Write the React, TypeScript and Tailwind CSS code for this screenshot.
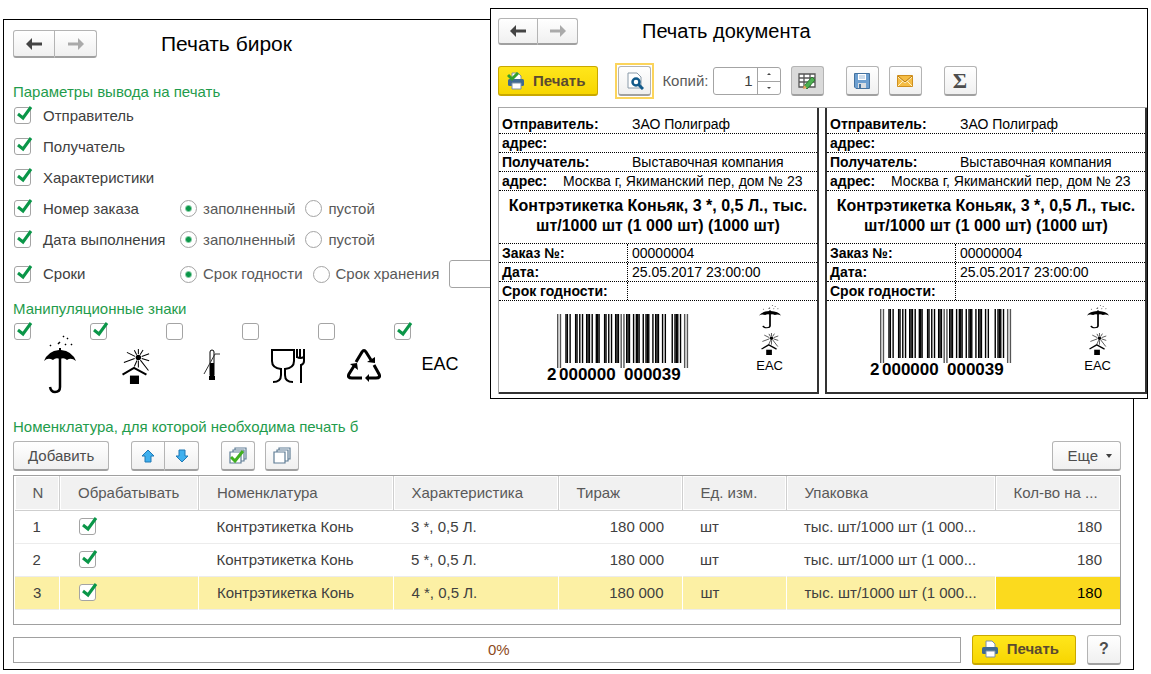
const font = 'font-["Liberation_Sans",sans-serif]';

const btnBase = 'flex items-center justify-center rounded-[3px] border border-[#b4b4b4] border-b-2 border-b-[#a0a0a0] text-[#4d4d4d]';
const btn = `${btnBase} bg-gradient-to-b from-white to-[#f0f0f0]`;
const pressedBtn = `${btnBase} bg-[#dadada]`;
const yellowBtn =
	'flex items-center gap-2 rounded-[3px] border border-[#c9a800] border-b-2 bg-gradient-to-b from-[#ffe61a] to-[#f7d600] pl-2 text-[15px] font-bold text-[#5a4a30]';

const App = () => {
	return (
		<div className={`relative bg-white pt-[19px] pb-1 pl-[3px] pr-[17px] text-[15px] leading-5 text-[#404040] ${font}`}>
			<TagsWindow />
			<DocumentWindow />
		</div>
	);
};

const TagsWindow = () => {
	return (
		<main className="flex flex-col border border-black bg-white pt-[10px] pb-1 pl-[9px] pr-3">
			<div className="flex items-center gap-16">
				<NavButtons />
				<h1 className="text-[21px] leading-7 text-black">Печать бирок</h1>
			</div>

			<h2 className="mt-[26px] leading-4 text-[#1f9c4c]">Параметры вывода на печать</h2>
			<div className="flex flex-col">
				<ParamRow id="sender" label="Отправитель" />
				<ParamRow id="receiver" label="Получатель" />
				<ParamRow id="props" label="Характеристики" />
				<ParamRow id="order" label="Номер заказа" options={['заполненный', 'пустой']} />
				<ParamRow id="date" label="Дата выполнения" options={['заполненный', 'пустой']} />
				<ParamRow id="terms" label="Сроки" options={['Срок годности', 'Срок хранения']} input />
			</div>

			<h2 className="mt-2 leading-4 text-[#1f9c4c]">Манипуляционные знаки</h2>
			<div className="flex">
				<Sign label="Беречь от влаги" checked><UmbrellaIcon className="h-[60px] w-[32px]" /></Sign>
				<Sign label="Беречь от солнца" checked><SunIcon className="mt-3.5 h-[35px] w-[28px]" /></Sign>
				<Sign label="Ограничение температуры"><ThermoIcon /></Sign>
				<Sign label="Пищевая продукция"><FoodIcon /></Sign>
				<Sign label="Переработка"><RecycleIcon /></Sign>
				<Sign label="Евразийское соответствие" checked><Eac className="mt-5 text-[18px]" /></Sign>
			</div>

			<h2 className="mt-5 leading-4 text-[#1f9c4c]">Номенклатура, для которой необходима печать б</h2>
			<div className="mt-1.5 flex items-start">
				<button className={`${btn} h-[30px] px-3.5`}>Добавить</button>
				<div className="ml-[22px] flex">
					<button aria-label="Вверх" className={`${btn} h-[30px] w-[34px] rounded-r-none`}><ArrowBlue /></button>
					<button aria-label="Вниз" className={`${btn} h-[30px] w-[34px] rounded-l-none border-l-0`}><ArrowBlue down /></button>
				</div>
				<button aria-label="Отметить все" className={`${btn} ml-[22px] h-[30px] w-[34px]`}><StackIcon checked /></button>
				<button aria-label="Снять отметки" className={`${btn} ml-[10px] h-[30px] w-[34px]`}><StackIcon /></button>
				<button className={`${btn} ml-auto h-[30px] gap-2 pl-3.5 pr-2`}>
					Еще
					<svg viewBox="0 0 6 4" className="h-1 w-1.5"><path d="M0 0h6L3 4z" fill="#404040" /></svg>
				</button>
			</div>

			<ItemsTable />

			<div className="mt-[10px] flex items-center gap-[11px]">
				<div role="progressbar" aria-valuenow={0} aria-label="Выполнение" className="flex h-[26px] flex-1 items-center justify-center border border-[#a0a0a0] pl-6 text-[#8c4a1c]">
					0%
				</div>
				<button className={`${yellowBtn} h-[30px] pr-4`}>
					<PrinterIcon />
					Печать
				</button>
				<button className={`${btn} h-[30px] w-[34px] text-[16px] font-bold`}>?</button>
			</div>
		</main>
	);
};

const NavButtons = ({ small }: { small?: boolean }) => {
	const size = small ? 'h-[27px] w-10' : 'h-7 w-[42px]';
	return (
		<div className="flex">
			<button aria-label="Назад" className={`${btn} ${size} rounded-r-none`}><NavArrow color="#444" /></button>
			<button aria-label="Вперед" className={`${btn} ${size} rounded-l-none border-l-0`}><NavArrow color="#aaa" flip /></button>
		</div>
	);
};

const NavArrow = ({ color, flip }: { color: string; flip?: boolean }) => {
	return (
		<svg viewBox="0 0 16 12" className={`h-3 w-4 ${flip ? 'rotate-180' : ''}`}>
			<path d="M0 6 6 0v12z" fill={color} />
			<path d="M4 6h12" stroke={color} strokeWidth="3" />
		</svg>
	);
};

const Check = ({ id, label, checked }: { id?: string; label?: string; checked?: boolean }) => {
	return (
		<span className="relative ml-px block h-[17px] w-[17px] shrink-0">
			<input
				id={id}
				type="checkbox"
				aria-label={label}
				defaultChecked={checked}
				className="peer block h-[17px] w-[17px] appearance-none rounded-[3px] border border-[#a4a4a4] bg-white"
			/>
			<svg viewBox="0 0 20 18" className="pointer-events-none absolute -top-px left-0 hidden h-[18px] w-5 peer-checked:block">
				<path d="m4 8 5 4 8-11" fill="none" stroke="#0a9648" strokeWidth="3" />
			</svg>
		</span>
	);
};

const ParamRow = ({ id, label, options, input }: { id: string; label: string; options?: string[]; input?: boolean }) => {
	return (
		<div className={`flex items-center ${input ? 'h-[38px]' : 'h-[31px]'}`}>
			<div className="flex w-[167px] items-center gap-3">
				<Check id={id} checked />
				<label htmlFor={id}>{label}</label>
			</div>
			{options && (
				<div className="flex items-center gap-2.5 text-[#595959]">
					{options.map((option, i) => (
						<label key={option} className="flex items-center gap-1.5">
							<input
								type="radio"
								name={id}
								defaultChecked={i === 0}
								className="h-[17px] w-[17px] appearance-none rounded-full border border-[#a4a4a4] bg-white checked:bg-[radial-gradient(circle,#0a9648_0_2px,transparent_4px)]"
							/>
							{option}
						</label>
					))}
				</div>
			)}
			{input && <input aria-label="Срок" className="ml-2.5 h-7 w-24 rounded-[3px] border border-[#a4a4a4]" />}
		</div>
	);
};

const Sign = ({ label, checked, children }: { label: string; checked?: boolean; children: React.ReactNode }) => {
	return (
		<div className="flex h-[82px] w-[76px] items-start pt-[6px]">
			<Check label={label} checked={checked} />
			<div className="flex flex-1 justify-center pt-3">{children}</div>
		</div>
	);
};

const rows = [
	{ n: 1, name: 'Контрэтикетка Конь', feature: '3 *, 0,5 Л.' },
	{ n: 2, name: 'Контрэтикетка Конь', feature: '5 *, 0,5 Л.' },
	{ n: 3, name: 'Контрэтикетка Конь', feature: '4 *, 0,5 Л.' },
];

const ItemsTable = () => {
	return (
		<div className="mt-1 border border-[#a0a0a0] pb-3.5">
			<table className="w-full table-fixed border-collapse text-left">
				<thead className="bg-[#f1f1f1] text-[#595959]">
					<tr className="h-[34px] border-b border-[#cfcfcf] [&>th]:border-l [&>th]:border-[#cfcfcf] [&>th]:pl-[18px] [&>th]:font-normal [&>th]:shadow-[inset_0_0_0_1px_#fff] [&>th:first-child]:border-l-0">
						<th className="w-[45px]">N</th>
						<th className="w-[139px]">Обрабатывать</th>
						<th>Номенклатура</th>
						<th className="w-[165px]">Характеристика</th>
						<th className="w-[124px]">Тираж</th>
						<th className="w-[104px]">Ед. изм.</th>
						<th className="w-[209px]">Упаковка</th>
						<th className="w-[125px]">Кол-во на ...</th>
					</tr>
				</thead>
				<tbody>
					{rows.map((row) => {
						const active = row.n === 3;
						return (
							<tr
								key={row.n}
								className={`h-[33px] border-b border-[#ececec] [&>td]:pl-[18px] ${active ? 'bg-[#fcf0a4] [&>td]:border-l [&>td]:border-white' : ''}`}
							>
								<td>{row.n}</td>
								<td><Check label={`Обрабатывать ${row.n}`} checked /></td>
								<td>{row.name}</td>
								<td>{row.feature}</td>
								<td className="pr-[18px] text-right">180 000</td>
								<td>шт</td>
								<td>тыс. шт/1000 шт (1 000...</td>
								<td className={`pr-[18px] text-right ${active ? 'bg-[#fbda1e] text-black' : ''}`}>180</td>
							</tr>
						);
					})}
				</tbody>
			</table>
		</div>
	);
};

const DocumentWindow = () => {
	return (
		<section className="absolute left-[490px] right-[3px] top-2 border border-black bg-white pb-1 pl-[7px]">
			<div className="flex items-center gap-16 pt-2">
				<NavButtons small />
				<h2 className="text-[20px] leading-7 text-black">Печать документа</h2>
			</div>

			<div className="mt-[18px] flex h-9 items-center">
				<button className={`${yellowBtn} h-[30px] pr-3`}>
					<PrinterIcon checked />
					Печать
				</button>
				<div className="ml-[17px] border-2 border-[#fbd45c] p-px">
					<button aria-label="Просмотр" className={`${btn} h-[30px] w-[33px]`}><PreviewIcon /></button>
				</div>
				<label htmlFor="copies" className="ml-2 text-[#595959]">Копий:</label>
				<div className="ml-1 flex h-7 w-[68px] rounded-[3px] border border-[#a4a4a4]">
					<input id="copies" defaultValue="1" className="w-[43px] pr-1 text-right" />
					<div className="flex flex-1 flex-col border-l border-[#a4a4a4]">
						<button aria-label="Больше" className="flex flex-1 items-center justify-center border-b border-[#a4a4a4]">
							<svg viewBox="0 0 4 2" className="h-0.5 w-1"><path d="M0 2h4L2 0z" fill="#444" /></svg>
						</button>
						<button aria-label="Меньше" className="flex flex-1 items-center justify-center">
							<svg viewBox="0 0 4 2" className="h-0.5 w-1"><path d="M0 0h4L2 2z" fill="#444" /></svg>
						</button>
					</div>
				</div>
				<button aria-label="Редактировать" className={`${pressedBtn} ml-[10px] h-[30px] w-[33px]`}><EditTableIcon /></button>
				<button aria-label="Сохранить" className={`${btn} ml-[22px] h-[30px] w-[33px]`}><SaveIcon /></button>
				<button aria-label="Отправить" className={`${btn} ml-[10px] h-[30px] w-[33px]`}><MailIcon /></button>
				<button aria-label="Сумма" className={`${btn} ml-[22px] h-[30px] w-[33px] font-["Liberation_Serif",serif] text-[22px] font-bold`}>Σ</button>
			</div>

			<div className="mt-2 flex gap-1.5 border-l border-t border-[#a8a8a8] text-[14px] leading-[18px] text-black">
				<Tag className="border-r-2" codeClass="pt-[13px] pl-[48px]" />
				<Tag className="border-x-2" codeClass="pt-2 pl-[43px]" />
			</div>
		</section>
	);
};

const Tag = ({ className, codeClass }: { className: string; codeClass: string }) => {
	const line = 'flex border-b border-dotted border-black pl-[3px] h-[19px] items-center';
	return (
		<div className={`flex-1 border-b-2 border-[#333] pt-[7px] ${className}`}>
			<div className={line}><b className="w-[130px]">Отправитель:</b>ЗАО Полиграф</div>
			<div className={line}><b>адрес:</b></div>
			<div className={line}><b className="w-[130px]">Получатель:</b>Выставочная компания</div>
			<div className={line}><b className="w-[61px]">адрес:</b><span className="whitespace-nowrap">Москва г, Якиманский пер, дом № 23</span></div>
			<div className="border-b border-dotted border-black px-1 pt-[5px] pb-[7px] text-center text-[16px] leading-5 font-bold">
				Контрэтикетка Коньяк, 3 *, 0,5 Л., тыс. шт/1000 шт (1 000 шт) (1000 шт)
			</div>
			<div className={line}><b className="w-[126px] border-r border-dotted border-black">Заказ №:</b><span className="pl-1">00000004</span></div>
			<div className={line}><b className="w-[126px] border-r border-dotted border-black">Дата:</b><span className="pl-1">25.05.2017 23:00:00</span></div>
			<div className={line}><b className="w-[126px] border-r border-dotted border-black">Срок годности:</b></div>
			<div className="flex h-[91px] items-start justify-between pr-[34px]">
				<div className={codeClass}><Barcode /></div>
				<div className="flex flex-col items-center gap-1 pt-1">
					<UmbrellaIcon className="h-[24px] w-[22px]" />
					<SunIcon className="h-[22px] w-[18px]" />
					<Eac className="text-[13px]" />
				</div>
			</div>
		</div>
	);
};

// EAN-13 for 2000000000039
const code =
	'101' + '0001101' + '0001101' + '0100111' + '0100111' + '0001101' + '0100111' + '01010' +
	'1110010' + '1110010' + '1110010' + '1110010' + '1000010' + '1110100' + '101';

const Barcode = () => {
	return (
		<svg viewBox="0 0 142 70" className="h-[70px] w-[142px]">
			{code.split('').map((bit, i) => {
				const long = i < 3 || (i > 44 && i < 50) || i > 91;
				return bit === '1' ? <rect key={i} x={10 + i * 1.38} y="0" width="1.4" height={long ? 54 : 49} fill={long ? '#555' : '#000'} /> : null;
			})}
			<g fontFamily="Liberation Sans" fontSize="17" fontWeight="bold">
				<text x="0" y="66">2</text>
				<text x="12" y="66">000000</text>
				<text x="77" y="66">000039</text>
			</g>
		</svg>
	);
};

const Eac = ({ className }: { className: string }) => {
	return <span className={`leading-none text-black ${className}`}>EAC</span>;
};

const UmbrellaIcon = ({ className }: { className: string }) => {
	return (
		<svg viewBox="0 0 32 60" preserveAspectRatio="none" className={className}>
			<path d="M0 26Q4 16 15 15V13h2v2q11 1 15 11-5-4-9-1-3-3-7-1-4-2-7 1-5-3-9 1z" />
			<path d="M16 22v30q0 5-5 5-4 0-5-5" fill="none" stroke="#000" strokeWidth="2.5" />
			<path d="m19 2 1-1m3 3 1-1m-9 5 1-1m-10 4 1-1m7-1 1-1m6 2 1-1m5 1 1-1" stroke="#000" strokeWidth="1.5" />
		</svg>
	);
};

const SunIcon = ({ className }: { className: string }) => {
	return (
		<svg viewBox="0 0 82 104" className={className} fill="none" stroke="#000">
			<path
				d="M48 0v15M36 4l7 13M62 3l-9 14M14 10l24 12M5 40l32-12M80 14l-22 8M80 35l-22-7M78 64 54 33M48 34v21M36 52l8-18"
				strokeWidth="3"
			/>
			<circle cx="48" cy="25" r="8" fill="#000" stroke="none" />
			<path d="m1 76 34-20 37 20" strokeWidth="6" />
			<path d="M23 79h27v25H23z" fill="#000" stroke="none" />
		</svg>
	);
};

const ThermoIcon = () => {
	return (
		<svg viewBox="0 0 18 32" className="mt-3.5 h-8 w-[18px]">
			<rect x="7" y="1" width="4" height="27" rx="2" fill="#fff" stroke="#000" />
			<path d="M7 14h4v15H7zM6 27h6v4H6z" />
			<path d="M1 25 12 5h5" fill="none" stroke="#333" />
		</svg>
	);
};

const FoodIcon = () => {
	return (
		<svg viewBox="0 0 34 34" className="mt-3.5 h-[34px] w-[34px]" fill="none" stroke="#000" strokeWidth="2">
			<path d="M10 20Q1 19 1 12V1h22v11q0 7-9 8" />
			<path d="M10 19v7q0 7-8 7M14 19v7q0 7 8 7" />
			<path d="M26 0v9M29 0v9M33 0v12q0 3-3 4v18M26 8q3 2 7 0" />
		</svg>
	);
};

const RecycleIcon = () => {
	return (
		<svg viewBox="0 0 34 34" className="mt-3.5 h-[34px] w-[34px]" fill="none" stroke="#000" strokeWidth="3">
			<path d="m9 13 6-10q2-3 4 0l5 8M27 16l5 9q2 4-3 4h-8M15 29H5q-5 0-3-4l5-8" />
			<path d="M28 8v6l-8-1zM18 29l4-4v8zM3 15l7-1 1 7z" fill="#000" stroke="none" />
		</svg>
	);
};

const ArrowBlue = ({ down }: { down?: boolean }) => {
	return (
		<svg viewBox="0 0 14 14" className={`h-3.5 w-3.5 ${down ? 'rotate-180' : ''}`}>
			<path d="M7 1 13 7H10v6H4V7H1z" fill="#3fb0ee" stroke="#1f79b5" />
		</svg>
	);
};

const StackIcon = ({ checked }: { checked?: boolean }) => {
	return (
		<svg viewBox="0 0 18 18" className="h-[18px] w-[18px]" fill="#fff" stroke="#5f7d95" strokeWidth="1.2">
			<path d="M6 1h11v11H6z" />
			<path d="M4 3h11v11H4z" />
			<path d="M1 5h11v11H1z" />
			{checked && <path d="m2 10 4 4 8-10" fill="none" stroke="#41b020" strokeWidth="3" />}
		</svg>
	);
};

const PrinterIcon = ({ checked }: { checked?: boolean }) => {
	return (
		<svg viewBox="0 0 18 18" className="h-[18px] w-[18px]">
			<path d="M5 1h6l3 3v5H5z" fill="#fff" stroke="#7d92a5" />
			<rect x="1" y="7" width="16" height="7" rx="1.5" fill="#3f6a92" />
			<path d="M5 11h9v6H5z" fill="#fff" stroke="#7d92a5" />
			{checked && <path d="m1 3 4 4 6-6" fill="none" stroke="#33a02c" strokeWidth="3" />}
		</svg>
	);
};

const PreviewIcon = () => {
	return (
		<svg viewBox="0 0 18 18" className="h-[18px] w-[18px]" fill="none">
			<path d="M2 1h9l4 4v11H2z" fill="#fff" stroke="#8a9aa8" />
			<circle cx="10" cy="10" r="3.5" fill="#fff" stroke="#125a8a" strokeWidth="2.5" />
			<path d="m12 12 5 5" stroke="#125a8a" strokeWidth="3" />
		</svg>
	);
};

const EditTableIcon = () => {
	return (
		<svg viewBox="0 0 18 18" className="h-[18px] w-[20px]" fill="none">
			<path d="M1 2h16v13H1zM1 6h16M1 10h16M6 2v13M12 2v13" fill="#fff" stroke="#555" strokeWidth="1.3" />
			<path d="m6 14 8-9 3 3-8 9z" fill="#4caf50" stroke="#2e7d32" />
			<path d="m5 17 1-4 3 3z" fill="#e8a15a" />
		</svg>
	);
};

const SaveIcon = () => {
	return (
		<svg viewBox="0 0 16 16" className="h-4 w-4">
			<path d="M.5.5h15v15H2L.5 14z" fill="#6d9fd0" stroke="#44729f" />
			<path d="M4 1h8v6H4z" fill="#fff" />
			<path d="M5 3h6M5 5h6" stroke="#9cb9d6" />
			<path d="M4 10h8v5H4z" fill="#d8dde2" />
			<path d="M5 11h2v4H5z" fill="#44729f" />
		</svg>
	);
};

const MailIcon = () => {
	return (
		<svg viewBox="0 0 16 12" className="h-3 w-4">
			<path d="M.5.5h15v11H.5z" fill="#f5bd45" stroke="#cf8f1d" />
			<path d="m1 2 7 6 7-6M1 11l5-5M15 11l-5-5" fill="none" stroke="#fff2c8" />
			<path d="m1 1 7 6 7-6" fill="none" stroke="#b97a10" />
		</svg>
	);
};

export default App;
